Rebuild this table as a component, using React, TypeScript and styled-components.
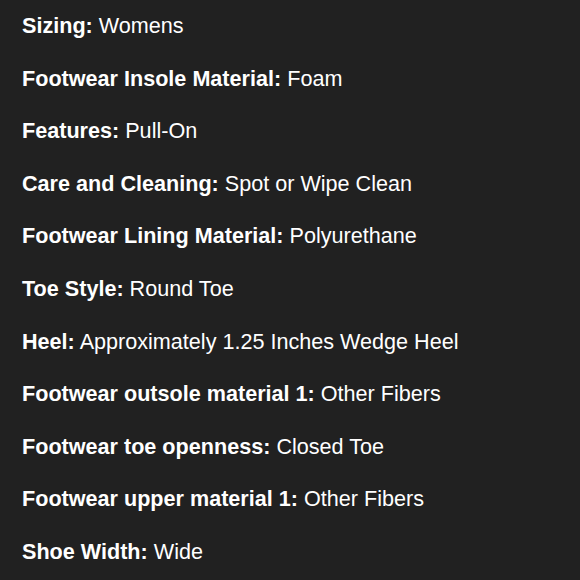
import React from "react";
import styled, { createGlobalStyle } from "styled-components";

const Global = createGlobalStyle`
  html, body { margin: 0; padding: 0; background: #212121; }
  body { font-family: "Liberation Sans", Arial, Helvetica, sans-serif; }
`;

const Page = styled.div`
  width: 580px;
  height: 580px;
  background: #212121;
  box-sizing: border-box;
  padding: 13px 22px 0;
  display: flex;
  flex-direction: column;
  gap: 27.6px;
`;

const Row = styled.div`
  color: #ffffff;
  font-size: 21.6px;
  line-height: 25px;
  white-space: nowrap;
`;

const Label = styled.span`
  font-weight: 700;
`;

const items: [string, string][] = [
  ["Sizing:", "Womens"],
  ["Footwear Insole Material:", "Foam"],
  ["Features:", "Pull-On"],
  ["Care and Cleaning:", "Spot or Wipe Clean"],
  ["Footwear Lining Material:", "Polyurethane"],
  ["Toe Style:", "Round Toe"],
  ["Heel:", "Approximately 1.25 Inches Wedge Heel"],
  ["Footwear outsole material 1:", "Other Fibers"],
  ["Footwear toe openness:", "Closed Toe"],
  ["Footwear upper material 1:", "Other Fibers"],
  ["Shoe Width:", "Wide"],
];

export default function App() {
  return (
    <>
      <Global />
      <Page>
        {items.map(([k, v]) => (
          <Row key={k}>
            <Label>{k}</Label> {v}
          </Row>
        ))}
      </Page>
    </>
  );
}
